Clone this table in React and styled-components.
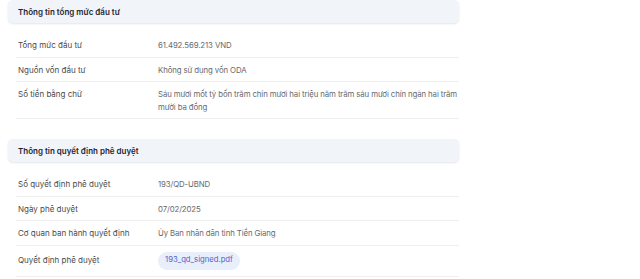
import React from "react";
import styled, { createGlobalStyle } from "styled-components";

const Global = createGlobalStyle`
  html, body { margin: 0; padding: 0; background: #ffffff; }
  body { font-family: Inter, "Noto Sans", sans-serif; -webkit-font-smoothing: antialiased; }
`;

const Page = styled.div`
  width: 451px;
  padding: 0 0 0 8px;
  display: flex;
  flex-direction: column;
  gap: 20px;
`;

const Section = styled.section`
  display: flex;
  flex-direction: column;
  gap: 10px;
`;

const Header = styled.div`
  height: 23px;
  display: flex;
  align-items: center;
  padding: 0 10px;
  background: #f1f4f9;
  border-radius: 5px;
  box-shadow: 0 1px 2px rgba(30, 40, 70, 0.12);
  font-size: 8px;
  font-weight: 600;
  color: #1f2430;
`;

const Rows = styled.div`
  margin-left: 8px;
  display: flex;
  flex-direction: column;
`;

const Row = styled.div`
  display: grid;
  grid-template-columns: 140px 1fr;
  align-items: ${(p) => (p.$pill ? "center" : "start")};
  padding: ${(p) => (p.$pill ? "6px 0 6px 2px" : "6px 0 5px 2px")};
  border-bottom: 1px solid #efefef;
  font-size: 8px;
  line-height: 12.5px;
`;

const Label = styled.div`
  color: #4a4a4a;
`;

const Value = styled.div`
  color: #666a70;
  font-size: 7.8px;
  letter-spacing: -0.1px;
`;

const FileChip = styled.span`
  display: inline-flex;
  align-items: center;
  height: 18px;
  padding: 0 7px;
  border-radius: 9px;
  background: #e9eefb;
  color: #4f63c9;
  font-size: 7.7px;
  justify-self: start;
`;

const sections = [
  {
    title: "Thông tin tổng mức đầu tư",
    rows: [
      ["Tổng mức đầu tư", "61.492.569.213 VND"],
      ["Nguồn vốn đầu tư", "Không sử dụng vốn ODA"],
      [
        "Số tiền bằng chữ",
        "Sáu mươi mốt tỷ bốn trăm chín mươi hai triệu năm trăm sáu mươi chín ngàn hai trăm mười ba đồng",
      ],
    ],
  },
  {
    title: "Thông tin quyết định phê duyệt",
    rows: [
      ["Số quyết định phê duyệt", "193/QD-UBND"],
      ["Ngày phê duyệt", "07/02/2025"],
      ["Cơ quan ban hành quyết định", "Ủy Ban nhân dân tỉnh Tiền Giang"],
      ["Quyết định phê duyệt", "193_qd_signed.pdf", true],
    ],
  },
];

export default function App() {
  return (
    <>
      <Global />
      <Page>
        {sections.map((s) => (
          <Section key={s.title}>
            <Header>{s.title}</Header>
            <Rows>
              {s.rows.map(([label, value, file]) => (
                <Row key={label} $pill={file}>
                  <Label>{label}</Label>
                  {file ? <FileChip>{value}</FileChip> : <Value>{value}</Value>}
                </Row>
              ))}
            </Rows>
          </Section>
        ))}
      </Page>
    </>
  );
}
